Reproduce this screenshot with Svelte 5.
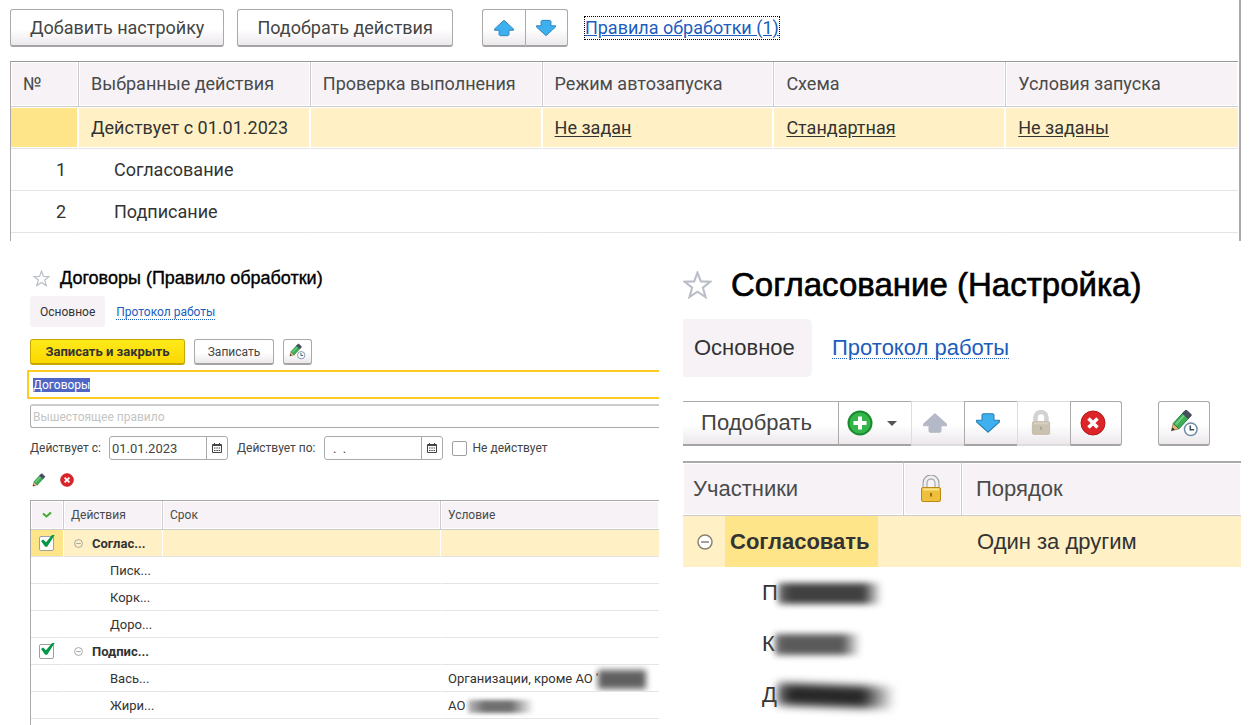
<script>
  import { onMount } from 'svelte';

  const planColumns = [
    'Выбранные действия',
    'Проверка выполнения',
    'Режим автозапуска',
    'Схема',
    'Условия запуска'
  ];

  const planRows = [
    { number: 1, title: 'Согласование' },
    { number: 2, title: 'Подписание' }
  ];

  const ruleRows = [
    { group: true, selected: true, title: 'Соглас...' },
    { title: 'Писк...' },
    { title: 'Корк...' },
    { title: 'Доро...' },
    { group: true, title: 'Подпис...' },
    { title: 'Вась...', condition: "Организации, кроме АО '", mask: 'mask-org' },
    { title: 'Жири...', condition: 'АО', mask: 'mask-company' }
  ];

  const members = [
    { initial: 'П', mask: 'mask-first' },
    { initial: 'К', mask: 'mask-second' },
    { initial: 'Д', mask: 'mask-third' }
  ];

  let ruleName = $state('Договоры');
  let parentRule = $state('');
  let dateFrom = $state('01.01.2023');
  let dateTo = $state('  .  .');
  let inactive = $state(false);
  let nameInput;

  onMount(() => {
    nameInput.focus();
    nameInput.select();
  });
</script>

{#snippet arrow(down, muted)}
  <svg class="icon-arrow" class:down class:muted viewBox="0 0 24 20" aria-hidden="true">
    <path d="M12 1.5 22.500 11v1.500h-5V17.500l-1 1h-9l-1-1V12.500H1.500V11Z" />
  </svg>
{/snippet}

{#snippet star()}
  <svg class="icon-star" viewBox="0 0 28 27" aria-hidden="true">
    <path d="m14 1.500 3.200 8.500 9.300.3-7.300 5.800 2.600 9.100L14 20l-7.800 5.200 2.600-9.100L1.500 10.300l9.300-.3Z" />
  </svg>
{/snippet}

{#snippet pencil()}
  <path d="m1.500 22.500 1.800-7.500 6 5.500Z" fill="#e9b872" stroke="#8a6a3c" stroke-width=".8" />
  <path d="m1.500 22.500.9-3.400 2.700 2.200Z" fill="#333" />
  <path d="M3.300 15 13 4.500l6 5.300L9.300 20.500Z" fill="#3fae58" stroke="#1f7d3a" />
  <path d="m5.800 16.200 9.200-9.900" stroke="#6fcf80" stroke-width="2" />
  <path d="m13 4.500 2.500-2.700q1-.9 2 0l4 3.500q1 1 .1 2L19 9.800Z" fill="#465162" stroke="#39424f" />
{/snippet}

{#snippet pencilClock()}
  <svg class="icon-pencil-clock" viewBox="0 0 30 29" fill="none" aria-hidden="true">
    {@render pencil()}
    <circle cx="21.500" cy="21" r="6.500" fill="#fff" stroke="#6f8ba5" stroke-width="1.500" />
    <path d="M21 17v4.500h4" stroke="#3c4b5c" stroke-width="1.600" />
  </svg>
{/snippet}

{#snippet cross()}
  <svg class="icon-cross" viewBox="0 0 26 26" aria-hidden="true">
    <circle cx="13" cy="13" r="12" fill="#dc2429" stroke="#b3171c" />
    <path d="m8.500 8.500 9 9m0-9-9 9" fill="none" stroke="#fff" stroke-width="3.500" />
  </svg>
{/snippet}

{#snippet calendar()}
  <svg class="icon-calendar" viewBox="0 0 10 10" aria-hidden="true">
    <path d="M.5 1.500h9v8h-9ZM.5 2.500h9M2.500 0v2M7.500 0v2" fill="none" stroke="#444" />
    <path d="M2 5h1.500M4.300 5h1.500M6.600 5h1.500M2 7.500h1.500M4.300 7.500h1.500M6.600 7.500h1.500" stroke="#444" />
  </svg>
{/snippet}

{#snippet lock(muted)}
  <svg class="icon-lock" class:muted viewBox="0 0 22 28" aria-hidden="true">
    <path class="shackle-edge" d="M5 13V8a6 6 0 0 1 12 0V13" />
    <path class="shackle" d="M5 13V8a6 6 0 0 1 12 0V13" />
    <rect class="body" x="1.500" y="12.500" width="19" height="14" rx="1.500" />
    <path class="shine" d="M3 14.500h16" />
    <path class="hole" d="M11 18v3.500" />
  </svg>
{/snippet}

{#snippet minus()}
  <svg class="icon-minus" viewBox="0 0 16 16" aria-hidden="true">
    <circle cx="8" cy="8" r="7" />
    <path d="M4 8h8" />
  </svg>
{/snippet}

<main>
  <section class="plan">
    <div class="plan-bar">
      <button class="btn large">Добавить настройку</button>
      <button class="btn large">Подобрать действия</button>
      <div class="arrows">
        <button class="btn" aria-label="Переместить вверх">{@render arrow(false, false)}</button>
        <button class="btn" aria-label="Переместить вниз">{@render arrow(true, false)}</button>
      </div>
      <a class="rules-link" href="#rules">Правила обработки (1)</a>
    </div>

    <div class="plan-grid">
      <table>
        <thead>
          <tr>
            <th class="col-number">№</th>
            {#each planColumns as column}
              <th>{column}</th>
            {/each}
          </tr>
        </thead>
        <tbody>
          <tr class="selected">
            <td class="current"></td>
            <td>Действует с 01.01.2023</td>
            <td></td>
            <td><a href="#mode">Не задан</a></td>
            <td><a href="#scheme">Стандартная</a></td>
            <td><a href="#conditions">Не заданы</a></td>
          </tr>
          {#each planRows as row}
            <tr>
              <td class="number">{row.number}</td>
              <td class="nested">{row.title}</td>
              <td></td>
              <td></td>
              <td></td>
              <td></td>
            </tr>
          {/each}
        </tbody>
      </table>
    </div>
  </section>

  <div class="forms">
    <section class="rule">
      <h1>{@render star()}Договоры (Правило обработки)</h1>
      <nav>
        <span class="tab">Основное</span>
        <a href="#log">Протокол работы</a>
      </nav>

      <div class="commands">
        <button class="btn primary">Записать и закрыть</button>
        <button class="btn save">Записать</button>
        <button class="btn edit" aria-label="История изменений">{@render pencilClock()}</button>
      </div>

      <input class="name" type="text" aria-label="Наименование" bind:this={nameInput} bind:value={ruleName} />
      <input class="parent" type="text" aria-label="Вышестоящее правило" placeholder="Вышестоящее правило" bind:value={parentRule} />

      <div class="period">
        <label for="date-from">Действует с:</label>
        <div class="date">
          <input id="date-from" type="text" bind:value={dateFrom} />
          <button aria-label="Выбрать дату начала">{@render calendar()}</button>
        </div>
        <label for="date-to">Действует по:</label>
        <div class="date">
          <input id="date-to" type="text" bind:value={dateTo} />
          <button aria-label="Выбрать дату окончания">{@render calendar()}</button>
        </div>
        <label class="inactive">
          <input class="check" type="checkbox" bind:checked={inactive} />
          Не действует
        </label>
      </div>

      <div class="row-tools">
        <button aria-label="Изменить">
          <svg class="icon-pencil" viewBox="0 0 24 24" fill="none" aria-hidden="true">{@render pencil()}</svg>
        </button>
        <button aria-label="Удалить">{@render cross()}</button>
      </div>

      <div class="rule-grid">
        <table>
          <thead>
            <tr>
              <th class="col-check">
                <svg class="icon-tick" viewBox="0 0 10 8" aria-label="Отметка"><path d="m1 2.500 3.500 3L9 1.500" /></svg>
              </th>
              <th class="col-action">Действия</th>
              <th class="col-term">Срок</th>
              <th>Условие</th>
            </tr>
          </thead>
          <tbody>
            {#each ruleRows as row}
              <tr class:selected={row.selected} class:group={row.group}>
                <td class="mark" class:current={row.selected}>
                  {#if row.group}
                    <input class="check" type="checkbox" aria-label={row.title} checked />
                  {/if}
                </td>
                <td class="action">
                  {#if row.group}{@render minus()}{/if}<span>{row.title}</span>
                </td>
                <td></td>
                <td class="condition">
                  {row.condition ?? ''}{#if row.mask}<i class="mask {row.mask}"></i>{/if}
                </td>
              </tr>
            {/each}
          </tbody>
        </table>
      </div>
    </section>

    <section class="setup">
      <h1>{@render star()}Согласование (Настройка)</h1>
      <nav>
        <span class="tab">Основное</span>
        <a href="#setup-log">Протокол работы</a>
      </nav>

      <div class="setup-bar">
        <div class="tools">
          <button class="btn pick">Подобрать</button>
          <button class="btn add" aria-label="Добавить">
            <svg class="icon-plus" viewBox="0 0 26 26" aria-hidden="true">
              <circle cx="13" cy="13" r="11.500" />
              <path d="M13 6.500v13M6.500 13h13" />
            </svg>
            <svg class="icon-caret" viewBox="0 0 10 5" aria-hidden="true"><path d="M0 0h10L5 5Z" /></svg>
          </button>
          <button class="btn off" aria-label="Вверх" disabled>{@render arrow(false, true)}</button>
          <button class="btn" aria-label="Вниз">{@render arrow(true, false)}</button>
          <button class="btn off" aria-label="Закрепить" disabled>{@render lock(true)}</button>
          <button class="btn" aria-label="Удалить участника">{@render cross()}</button>
        </div>
        <button class="btn history" aria-label="История настройки">{@render pencilClock()}</button>
      </div>

      <table>
        <thead>
          <tr>
            <th class="col-member">Участники</th>
            <th class="col-lock">{@render lock(false)}</th>
            <th>Порядок</th>
          </tr>
        </thead>
        <tbody>
          <tr class="selected">
            <td class="approve">
              <div>{@render minus()}<b>Согласовать</b></div>
            </td>
            <td></td>
            <td>Один за другим</td>
          </tr>
          {#each members as member}
            <tr>
              <td class="member" colspan="3">{member.initial}<i class="mask {member.mask}"></i></td>
            </tr>
          {/each}
        </tbody>
      </table>
    </section>
  </div>
</main>

<style>
  :global(body) {
    margin: 0;
    background: #fff;
  }

  main {
    padding-right: 12px;
    overflow: hidden;
    color: #333;
    font-family: Roboto, 'Liberation Sans', sans-serif;
    font-size: 12px;
  }

  button,
  input {
    margin: 0;
    padding: 0;
    box-sizing: border-box;
    color: inherit;
    font: inherit;
  }

  button {
    border: 0;
    background: none;
  }

  svg {
    display: block;
    flex: none;
  }

  .btn {
    display: flex;
    align-items: center;
    justify-content: center;
    border: 1px solid #aaa;
    border-bottom: 2px solid #a4a4a4;
    border-radius: 3px;
    background: linear-gradient(#fff 55%, #ece8ec);
    color: #444;
    white-space: nowrap;
  }

  table {
    width: 100%;
    table-layout: fixed;
    border-collapse: separate;
    border-spacing: 0;
  }

  th,
  td {
    box-sizing: border-box;
    overflow: hidden;
    text-align: left;
    white-space: nowrap;
  }

  th {
    border-right: 1px solid #ccc;
    border-bottom: 1px solid #ccc;
    background: #f6f2f6;
    box-shadow: inset 0 0 0 1px #fff;
    color: #4a4a4a;
    font-weight: normal;
  }

  .selected td {
    background: #fff1c5;
  }

  .selected .current {
    background: #ffe589;
  }

  /* plan of actions */
  .plan {
    box-sizing: border-box;
    padding: 9px 1px 0 10px;
    border-right: 2px solid #aaa;
    font-size: 18px;
  }

  .plan-bar {
    display: flex;
    align-items: center;
    gap: 13px;
    margin-bottom: 14px;
  }

  .plan-bar .btn {
    height: 38px;
  }

  .large {
    padding: 0 19px;
  }

  .arrows {
    display: flex;
    margin-left: 16px;
  }

  .arrows .btn {
    width: 43px;
  }

  .arrows .btn:first-child,
  .tools .btn:not(:last-child) {
    border-right: 0;
    border-top-right-radius: 0;
    border-bottom-right-radius: 0;
  }

  .arrows .btn:last-child,
  .tools .btn:not(:first-child) {
    border-top-left-radius: 0;
    border-bottom-left-radius: 0;
  }

  .rules-link {
    margin-left: 3px;
    border: 1px dotted #000;
    color: #1a5dbe;
    line-height: 22px;
  }

  .plan-grid {
    padding-bottom: 8px;
    border-top: 1px solid #999;
    border-left: 1px solid #aaa;
  }

  .plan th {
    height: 45px;
    padding: 0 12px 2px;
  }

  .plan .col-number {
    width: 68px;
  }

  .plan td {
    height: 42px;
    padding: 0 12px;
    border-right: 1px solid #fff;
    border-bottom: 1px solid #e4e4e4;
  }

  .plan .selected td {
    border-right: 2px solid #fff;
    box-shadow: inset 0 -1px #fff, inset 0 1px #fff;
  }

  .plan td a {
    color: #333;
    text-underline-offset: 2px;
  }

  .plan .number {
    text-align: right;
  }

  .plan .nested {
    padding-left: 35px;
  }

  /* shared parts of both forms */
  .forms {
    display: grid;
    grid-template-columns: minmax(0, 659fr) minmax(0, 558fr);
    gap: 24px;
  }

  h1 {
    display: flex;
    align-items: center;
    margin: 0;
    color: #000;
    font-family: 'Liberation Sans', Arial, sans-serif;
    font-weight: normal;
    white-space: nowrap;
    -webkit-text-stroke: 0.02em #000;
  }

  nav {
    display: flex;
    align-items: center;
  }

  nav a {
    color: #1a5dbe;
    text-decoration: underline dotted 1px;
    text-underline-offset: 3px;
  }

  .tab {
    display: flex;
    align-items: center;
    background: #f6f2f6;
  }

  .check {
    position: relative;
    flex: none;
    width: 15px;
    height: 15px;
    border: 1px solid #a0a0a0;
    border-radius: 2px;
    background: #fff;
    appearance: none;
  }

  .check:checked::after {
    content: '';
    position: absolute;
    top: -2px;
    left: 1px;
    width: 14px;
    height: 13px;
    background: #009846;
    clip-path: polygon(0 50%, 15% 38%, 36% 60%, 82% 0, 100% 0, 44% 95%, 30% 95%);
  }

  .mask {
    display: inline-block;
    margin: -4px 0;
    vertical-align: middle;
  }

  /* rule form */
  .rule {
    padding: 25px 0 0 30px;
  }

  .rule h1 {
    gap: 10px;
    height: 24px;
    padding-left: 3px;
    font-size: 18px;
  }

  .rule nav {
    gap: 11px;
    margin-top: 6px;
  }

  .rule .tab {
    height: 31px;
    padding: 0 10px;
    border-radius: 3px;
  }

  .commands {
    display: flex;
    gap: 9px;
    margin-top: 12px;
  }

  .commands .btn {
    height: 26px;
  }

  .commands .primary {
    width: 155px;
    border-color: #c8a800;
    background: linear-gradient(#ffea1a, #fbd800);
    color: #333;
    font-size: 13px;
    font-weight: bold;
  }

  .commands .save {
    width: 80px;
  }

  .commands .edit {
    width: 29px;
  }

  .name {
    display: block;
    width: calc(100% + 3px);
    height: 29px;
    margin: 5px 0 0 -3px;
    padding-left: 4px;
    border: 2px solid #ffcd22;
    border-right: 0;
    outline: 0;
  }

  .name::selection {
    background: #4f66c4;
    color: #fff;
  }

  .parent {
    display: block;
    width: 100%;
    height: 24px;
    margin-top: 5px;
    padding-left: 2px;
    border: 1px solid #aaa;
    border-top: 2px solid #ccc;
    border-right: 0;
    border-radius: 3px 0 0 3px;
  }

  .parent::placeholder {
    color: #c4c4c4;
  }

  .period {
    display: flex;
    align-items: center;
    margin-top: 8px;
    white-space: nowrap;
    color: #444;
  }

  .date {
    display: flex;
    box-sizing: border-box;
    width: 119px;
    height: 24px;
    margin: 0 9px 0 8px;
    border: 1px solid #aaa;
    border-radius: 3px;
  }

  .date input {
    flex: 1;
    min-width: 0;
    padding-left: 2px;
    border: 0;
    background: none;
    font-size: 13px;
    white-space: pre;
  }

  .date button {
    display: flex;
    align-items: center;
    justify-content: center;
    width: 21px;
    border-left: 1px solid #aaa;
  }

  .inactive {
    display: flex;
    align-items: center;
    gap: 6px;
  }

  .row-tools {
    display: flex;
    align-items: center;
    gap: 14px;
    height: 40px;
    padding-left: 2px;
  }

  .rule-grid {
    padding-bottom: 6px;
    border-top: 1px solid #aaa;
    border-left: 1px solid #aaa;
  }

  .rule th {
    height: 29px;
    padding: 0 7px;
  }

  .rule .col-check {
    width: 33px;
    padding: 0 11px;
  }

  .rule .col-action {
    width: 99px;
  }

  .rule .col-term {
    width: 278px;
  }

  .rule td {
    height: 27px;
    padding: 0 7px;
    border-right: 1px solid #fff;
    border-bottom: 1px solid #e4e4e4;
    font-size: 13px;
  }

  .rule .mark {
    padding: 0 8px;
  }

  .mark .check {
    display: block;
  }

  .action span {
    padding-left: 39px;
  }

  .group .action {
    font-weight: bold;
  }

  .group .action span {
    padding-left: 9px;
  }

  .group .icon-minus {
    display: inline-block;
    margin-left: 3px;
    vertical-align: 0;
  }

  th:last-child,
  .plan td:last-child,
  .plan .selected td:last-child,
  .rule td:last-child {
    border-right: 0;
  }

  .mask-org {
    width: 48px;
    height: 19px;
    filter: blur(3px);
    background: #606060;
  }

  .mask-company {
    width: 66px;
    height: 13px;
    margin-left: 3px;
    filter: blur(2px);
    background: linear-gradient(90deg, #bbb, #707070 25% 65%, #fff);
  }

  /* setup form */
  .setup {
    padding-top: 22px;
    font-family: 'Liberation Sans', Arial, sans-serif;
    font-size: 22px;
  }

  .setup h1 {
    gap: 19px;
    height: 44px;
    font-size: 33px;
  }

  .setup nav {
    gap: 20px;
    margin-top: 12px;
  }

  .setup .tab {
    box-sizing: border-box;
    width: 129px;
    height: 58px;
    padding: 0 11px;
    border-radius: 0 5px 5px 0;
  }

  .setup-bar {
    display: flex;
    gap: 36px;
    margin: 24px 0 15px;
  }

  .tools {
    display: flex;
  }

  .setup-bar .btn {
    width: 53px;
    height: 45px;
  }

  .tools .btn {
    padding-right: 6px;
  }

  .setup-bar .btn:last-child {
    width: 52px;
  }

  .setup-bar .pick {
    width: 155px;
    border-left: 0;
    border-radius: 0;
    padding-right: 8px;
  }

  .setup-bar .add {
    gap: 14px;
    width: 73px;
  }

  .setup-bar .off {
    border-color: #ddd;
  }

  .setup th {
    height: 55px;
    padding: 0 14px;
    border-top: 2px solid #aaa;
  }

  .setup .col-member {
    width: 221px;
    padding-left: 10px;
  }

  .setup .col-lock {
    width: 58px;
    padding: 0 16px;
  }

  .setup td {
    height: 51px;
    padding: 0 15px;
  }

  .setup .approve {
    padding: 0;
  }

  .approve div {
    display: flex;
    align-items: center;
    gap: 12px;
    padding-left: 14px;
  }

  .approve b {
    padding: 0 8px 0 5px;
    background: #ffe589;
    line-height: 51px;
  }

  .setup .member {
    padding-left: 79px;
  }

  .mask-first {
    width: 104px;
    height: 21px;
    background: linear-gradient(90deg, #777, #404040 12% 82%, #fff);
    filter: blur(3px);
  }

  .mask-second {
    width: 86px;
    height: 21px;
    background: linear-gradient(90deg, #777, #5a5a5a 12% 78%, #fff);
    filter: blur(3px);
  }

  .mask-third {
    width: 118px;
    height: 22px;
    background: linear-gradient(90deg, #777, #282828 12% 72%, #fff);
    filter: blur(4px);
    transform: rotate(2deg);
  }

  /* icons */
  .icon-arrow {
    width: 22px;
    height: 18px;
    fill: #3fb0ef;
    stroke: #277fb5;
  }

  .icon-arrow.down {
    transform: rotate(180deg);
  }

  .icon-arrow.muted {
    fill: #b3b9c6;
    stroke: #b3b9c6;
  }

  .setup .icon-arrow {
    width: 26px;
    height: 22px;
  }

  .icon-star {
    width: 17px;
    height: 17px;
    fill: #fff;
    stroke: #b9bec8;
    stroke-width: 2;
    -webkit-text-stroke: 0;
  }

  .setup .icon-star {
    width: 29px;
    height: 28px;
  }

  .icon-pencil {
    width: 14px;
    height: 14px;
  }

  .icon-pencil-clock {
    width: 17px;
    height: 17px;
  }

  .setup .icon-pencil-clock {
    width: 29px;
    height: 28px;
  }

  .icon-cross {
    width: 14px;
    height: 14px;
  }

  .setup .icon-cross {
    width: 26px;
    height: 26px;
  }

  .icon-calendar {
    width: 10px;
    height: 10px;
  }

  .icon-tick {
    width: 10px;
    height: 8px;
    fill: none;
    stroke: #3fae29;
    stroke-width: 2;
  }

  .icon-minus {
    width: 9px;
    height: 9px;
    fill: none;
    stroke: #999;
    stroke-width: 1.500;
  }

  .setup .icon-minus {
    width: 16px;
    height: 16px;
    fill: #fff;
    stroke: #8b8372;
  }

  .icon-plus {
    width: 26px;
    height: 26px;
    fill: #35b44a;
    stroke: #168a2c;
    stroke-width: 2;
  }

  .icon-plus path {
    stroke: #fff;
    stroke-width: 4;
  }

  .icon-caret {
    width: 10px;
    height: 5px;
    fill: #555;
  }

  .icon-lock {
    width: 22px;
    height: 28px;
    fill: none;
  }

  .icon-lock.muted {
    width: 20px;
    height: 26px;
  }

  .shackle-edge {
    stroke: #999;
    stroke-width: 5;
  }

  .shackle {
    stroke: #eee;
    stroke-width: 3;
  }

  .body {
    fill: #eebf3a;
    stroke: #bb8a16;
  }

  .shine {
    stroke: #fbe38c;
    stroke-width: 2;
  }

  .hole {
    stroke: #9a6f0c;
    stroke-width: 2;
  }

  .muted .shackle-edge,
  .muted .shackle {
    stroke: #d2d2d2;
  }

  .muted .body {
    fill: #c9c2b0;
    stroke: #c0b9a8;
  }

  .muted .shine {
    stroke: #d8d2c3;
  }

  .muted .hole {
    stroke: #aaa18c;
  }
</style>
